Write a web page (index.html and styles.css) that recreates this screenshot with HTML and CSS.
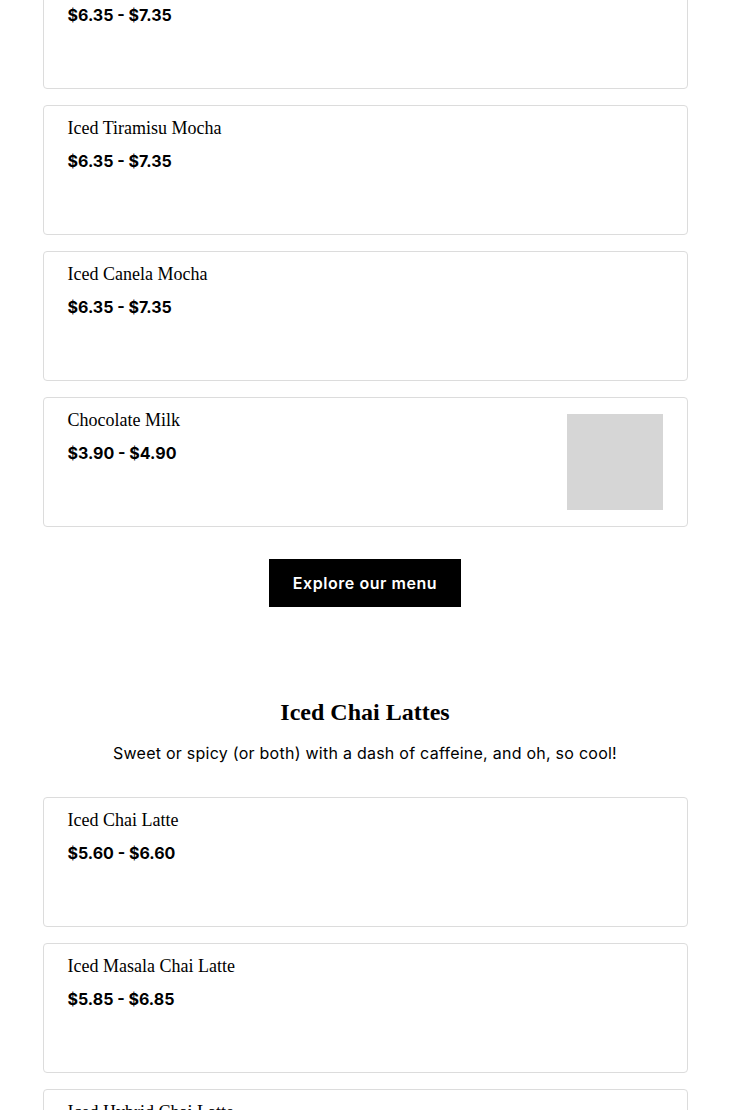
FILE: index.html
```html
<!DOCTYPE html>
<html lang="en">
<head>
<meta charset="utf-8">
<title>Menu</title>
<link rel="stylesheet" href="styles.css">
</head>
<body>
<main class="page">
  <section class="section first">
    <ul class="cards">
      <li class="card">
        <div class="info">
          <h3 class="name">Iced Mocha</h3>
          <p class="price">$6.35 - $7.35</p>
        </div>
      </li>
      <li class="card">
        <div class="info">
          <h3 class="name">Iced Tiramisu Mocha</h3>
          <p class="price">$6.35 - $7.35</p>
        </div>
      </li>
      <li class="card">
        <div class="info">
          <h3 class="name">Iced Canela Mocha</h3>
          <p class="price">$6.35 - $7.35</p>
        </div>
      </li>
      <li class="card">
        <div class="info">
          <h3 class="name">Chocolate Milk</h3>
          <p class="price">$3.90 - $4.90</p>
        </div>
        <div class="thumb"></div>
      </li>
    </ul>
    <div class="actions">
      <a class="btn" href="#">Explore our menu</a>
    </div>
  </section>

  <section class="section">
    <h2 class="section-title">Iced Chai Lattes</h2>
    <p class="section-sub">Sweet or spicy (or both) with a dash of caffeine, and oh, so cool!</p>
    <ul class="cards">
      <li class="card">
        <div class="info">
          <h3 class="name">Iced Chai Latte</h3>
          <p class="price">$5.60 - $6.60</p>
        </div>
      </li>
      <li class="card">
        <div class="info">
          <h3 class="name">Iced Masala Chai Latte</h3>
          <p class="price">$5.85 - $6.85</p>
        </div>
      </li>
      <li class="card">
        <div class="info">
          <h3 class="name">Iced Hybrid Chai Latte</h3>
          <p class="price">$5.85 - $6.85</p>
        </div>
      </li>
    </ul>
  </section>
</main>
</body>
</html>
```

FILE: styles.css
```css
* { box-sizing: border-box; }

html, body {
  margin: 0;
  padding: 0;
  background: #fff;
  color: #000;
  font-family: Inter, "Liberation Sans", sans-serif;
}

.page {
  width: 645px;
  margin: -41px auto 0;
}

.section + .section {
  padding-top: 90px;
}

.cards {
  list-style: none;
  margin: 0;
  padding: 0;
  display: flex;
  flex-direction: column;
  gap: 16px;
}

.card {
  display: flex;
  justify-content: space-between;
  align-items: flex-start;
  min-height: 130px;
  padding: 12px 24px 16px;
  border: 1px solid #dcdcdc;
  border-radius: 4px;
  background: #fff;
}

.name {
  margin: 0;
  font-family: "Liberation Serif", "Times New Roman", serif;
  font-size: 18px;
  font-weight: 400;
  line-height: 21.6px;
}

.price {
  margin: 9px 0 0;
  font-size: 16px;
  font-weight: 700;
  line-height: 24px;
}

.thumb {
  width: 96px;
  height: 96px;
  margin-top: 4px;
  background: #d6d6d6;
  flex: none;
}

.actions {
  display: flex;
  justify-content: center;
  margin-top: 32px;
}

.btn {
  display: inline-flex;
  align-items: center;
  height: 48px;
  padding: 0 24px;
  background: #000;
  color: #fff;
  text-decoration: none;
  font-size: 16px;
  font-weight: 600;
  letter-spacing: 0.55px;
}

.section-title {
  margin: 0;
  text-align: center;
  font-family: "Liberation Serif", "Times New Roman", serif;
  font-size: 24px;
  font-weight: 700;
  line-height: 31px;
}

.section-sub {
  margin: 13px 0 32px;
  text-align: center;
  font-size: 16px;
  line-height: 24px;
  letter-spacing: 0.25px;
}
```
